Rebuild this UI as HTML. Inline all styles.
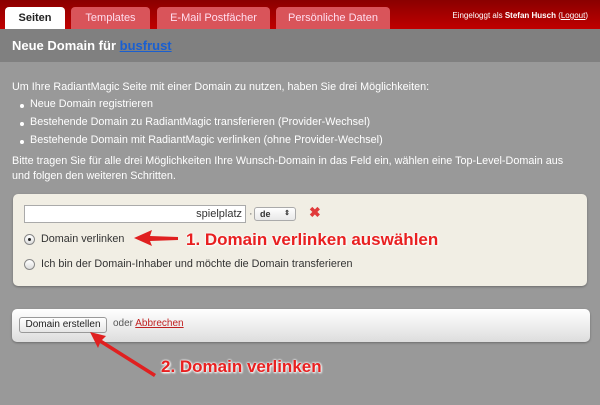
<!DOCTYPE html>
<html><head><meta charset="utf-8"><style>
*{margin:0;padding:0;box-sizing:border-box}
body{width:600px;height:405px;background:#999;font-family:"Liberation Sans",sans-serif;color:#fff;font-size:10.8px;position:relative;overflow:hidden}
.top{position:absolute;left:0;top:0;width:600px;height:29px;background:linear-gradient(#8a0000,#c00000)}
.tab{position:absolute;top:7px;height:22px;border-radius:4px 4px 0 0;background:#d9545a;color:#fde;font-size:11px;text-align:center;line-height:22px}
.tab.a{background:#fff;color:#222;font-weight:bold}
.login{position:absolute;right:12px;top:11px;font-size:8px;color:#fff}
.title{position:absolute;left:0;top:29px;width:600px;height:33px;background:#808080;font-weight:bold;font-size:13px;padding:9px 12px}
.title a{color:#1a5fd0}
.t{position:absolute;left:12px}
.b{position:absolute;left:20px;width:4px;height:4px;border-radius:50%;background:#fff}
.p1{position:absolute;left:13px;top:194px;width:574px;height:92px;background:#f1eee4;border-radius:5px;box-shadow:0 1px 2px rgba(0,0,0,.3);color:#333}
.p2{position:absolute;left:12px;top:309px;width:578px;height:33px;background:linear-gradient(#fff,#ddd);border-radius:5px;box-shadow:0 1px 2px rgba(0,0,0,.3);color:#555}
.red{position:absolute;color:#e82020;font-weight:bold;font-size:17px;text-shadow:0 0 2px #fff,0 0 2px #fff,1px 1px 2px #fff}
.radio{position:absolute;width:11px;height:11px;border-radius:50%;border:1px solid #888;background:linear-gradient(#fff,#ddd)}
</style></head><body>
<div class="top"></div>
<div class="tab a" style="left:5px;width:60px">Seiten</div>
<div class="tab" style="left:71px;width:79px">Templates</div>
<div class="tab" style="left:157px;width:113px">E-Mail Postfächer</div>
<div class="tab" style="left:276px;width:114px">Persönliche Daten</div>
<div class="login">Eingeloggt als <b>Stefan Husch</b> (<u>Logout</u>)</div>
<div class="title">Neue Domain für <a><u>busfrust</u></a></div>
<div class="t" style="top:81px">Um Ihre RadiantMagic Seite mit einer Domain zu nutzen, haben Sie drei Möglichkeiten:</div>
<div class="b" style="top:104px"></div><div class="t" style="left:30px;top:98px">Neue Domain registrieren</div>
<div class="b" style="top:122px"></div><div class="t" style="left:30px;top:116px">Bestehende Domain zu RadiantMagic transferieren (Provider-Wechsel)</div>
<div class="b" style="top:140px"></div><div class="t" style="left:30px;top:134px">Bestehende Domain mit RadiantMagic verlinken (ohne Provider-Wechsel)</div>
<div class="t" style="top:154px;line-height:15px">Bitte tragen Sie für alle drei Möglichkeiten Ihre Wunsch-Domain in das Feld ein, wählen eine Top-Level-Domain aus<br>und folgen den weiteren Schritten.</div>
<div class="p1">
<div style="position:absolute;left:11px;top:11px;width:222px;height:18px;background:#fff;border:1px solid #aaa;text-align:right;padding:2px 3px;font-size:11px;color:#333">spielplatz</div>
<div style="position:absolute;left:236px;top:14px;color:#666">·</div>
<div style="position:absolute;left:241px;top:13px;width:42px;height:14px;background:linear-gradient(#fff,#e8e8e8);border:1px solid #aaa;border-radius:3px;font-size:9px;padding:1px 5px;font-weight:bold">de <span style="float:right;font-size:7px">⇕</span></div>
<div style="position:absolute;left:296px;top:10px;color:#e03a3a;font-weight:bold;font-size:14px">✖</div>
<div class="radio" style="left:11px;top:40px"><div style="width:3px;height:3px;border-radius:50%;background:#222;margin:3px"></div></div>
<div style="position:absolute;left:28px;top:39px">Domain verlinken</div>
<div class="radio" style="left:11px;top:65px"></div>
<div style="position:absolute;left:28px;top:64px">Ich bin der Domain-Inhaber und möchte die Domain transferieren</div>
</div>
<div class="red" style="left:186px;top:230px">1. Domain verlinken auswählen</div>
<svg style="position:absolute;left:130px;top:228px" width="50" height="20"><path d="M4 10 L22 2 L20 8 L48 9 L48 12 L20 13 L22 18 Z" fill="#e02020"/></svg>
<div class="p2">
<div style="position:absolute;left:7px;top:8px;width:88px;height:16px;background:linear-gradient(#fff,#e6e6e6);border:1px solid #999;border-radius:3px;color:#222;text-align:center;line-height:14px;font-size:10px">Domain erstellen</div>
<div style="position:absolute;left:101px;top:9px;font-size:10px">oder <u style="color:#c02020">Abbrechen</u></div>
</div>
<svg style="position:absolute;left:88px;top:330px" width="70" height="50"><path d="M2 2 L18 6 L14 10 L68 44 L66 47 L12 13 L10 18 Z" fill="#e02020"/></svg>
<div class="red" style="left:161px;top:357px">2. Domain verlinken</div>
</body></html>
